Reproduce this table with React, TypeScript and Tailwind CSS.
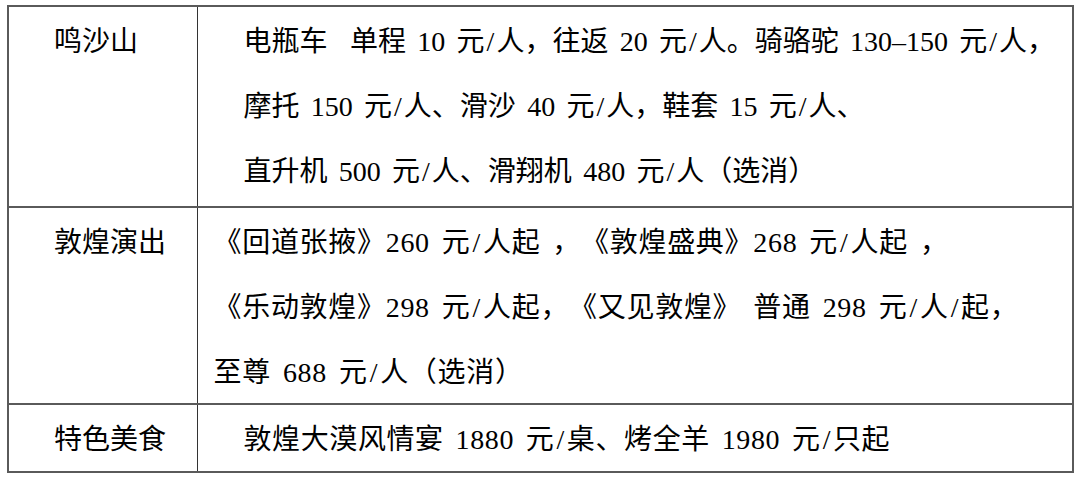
const rows = [
  {
    label: '鸣沙山',
    cell: 'pl-[46px] pb-[4px]',
    lines: [
      '电瓶车  单程 10 元/人，往返 20 元/人。骑骆驼 130–150 元/人，',
      '摩托 150 元/人、滑沙 40 元/人，鞋套 15 元/人、',
      '直升机 500 元/人、滑翔机 480 元/人（选消）',
    ],
  },
  {
    label: '敦煌演出',
    cell: 'pl-[16px] tracking-[0.7px]',
    lines: [
      '《回道张掖》260 元/人起 ，《敦煌盛典》268 元/人起 ，',
      '《乐动敦煌》298 元/人起，《又见敦煌》 普通 298 元/人/起，',
      '至尊 688 元/人（选消）',
    ],
  },
  {
    label: '特色美食',
    cell: 'pl-[46px] pb-[1px] tracking-[0.6px]',
    lines: ['敦煌大漠风情宴 1880 元/桌、烤全羊 1980 元/只起'],
  },
]

// digits are set in a Times-like face, the rest in the CJK face
function Line({ text }: { text: string }) {
  const parts = text.split(/(\d+(?:–\d+)?|\/)/)
  return (
    <div className="h-[65px] leading-[65px]">
      {parts.map((p, k) =>
        p === '/' ? (
          <span key={k} className="font-['Liberation_Serif'] leading-none px-[2px]">
            {p}
          </span>
        ) : /^\d/.test(p) ? (
          <span key={k} className="font-['Liberation_Serif'] leading-none">
            {p}
          </span>
        ) : (
          <span key={k} className="leading-none">
            {p}
          </span>
        )
      )}
    </div>
  )
}

export default function App() {
  return (
    <div className="w-[1080px] h-[478px] bg-white pl-[7px] pt-[5px] text-black font-['Noto_Sans_CJK_SC',sans-serif]">
      <table className="w-[1067px] border-collapse border-2 border-[#5a5a5a] text-[28px]">
        <tbody>
          {rows.map((row, i) => (
            <tr key={i} className="border-b-2 border-[#5a5a5a] align-top">
              <td className="w-[189px] border-r-[1.5px] border-[#333] pl-[45px] h-[65px] leading-[65px] whitespace-nowrap">
                <span className="leading-none">{row.label}</span>
              </td>
              <td
                className={`${row.cell} whitespace-pre [word-spacing:5px] [text-spacing-trim:space-all]`}
              >
                {row.lines.map((l, j) => (
                  <Line key={j} text={l} />
                ))}
              </td>
            </tr>
          ))}
        </tbody>
      </table>
    </div>
  )
}
